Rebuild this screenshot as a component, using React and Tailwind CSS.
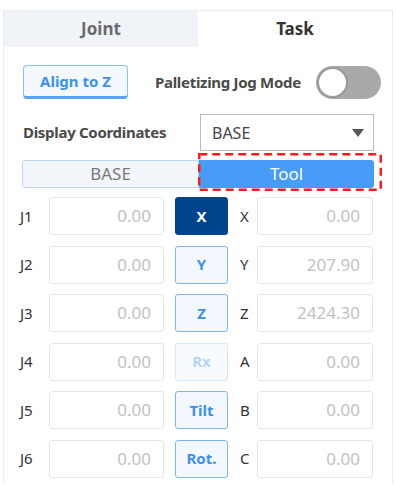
import { useState } from 'react'

const rows = [
  { j: 'J1', btn: 'X', axis: 'X', value: '0.00', state: 'active' },
  { j: 'J2', btn: 'Y', axis: 'Y', value: '207.90', state: 'on' },
  { j: 'J3', btn: 'Z', axis: 'Z', value: '2424.30', state: 'on' },
  { j: 'J4', btn: 'Rx', axis: 'A', value: '0.00', state: 'off' },
  { j: 'J5', btn: 'Tilt', axis: 'B', value: '0.00', state: 'on' },
  { j: 'J6', btn: 'Rot.', axis: 'C', value: '0.00', state: 'on' },
]

function AxisButton({ label, state }) {
  const styles = {
    active: 'bg-[#00448e] border-[#00448e] text-white',
    on: 'bg-[#f3f8ff] border-[#7db6f6] text-[#3d8ff0]',
    off: 'bg-[#f7fbff] border-[#d3e6fb] text-[#b7d5f8]',
  }
  return (
    <button
      className={`w-[53px] h-[38px] shrink-0 rounded-[3px] border text-[15px] font-bold ${styles[state]}`}
    >
      {label}
    </button>
  )
}

function ValueBox({ value, w }) {
  return (
    <div
      className={`${w} h-[38px] shrink-0 rounded-[3px] border border-[#e6e6e6] bg-white flex items-center justify-end pr-[12px] text-[17px] text-[#c2c2c2]`}
    >
      {value}
    </div>
  )
}

export default function App() {
  const [palletizing, setPalletizing] = useState(false)

  return (
    <div className="w-[396px] h-[501px] bg-white pt-[10px] px-[3px] font-['Noto_Sans',sans-serif]">
      <div className="h-[474px] border-t border-x border-[#ececec]">
        <div className="flex h-[36px]">
          <div className="flex-1 bg-[#f0f4f8] flex items-center justify-center text-[17px] font-bold text-[#6b6b6b]">
            Joint
          </div>
          <div className="flex-1 bg-white flex items-center justify-center text-[17px] font-bold text-[#333]">
            Task
          </div>
        </div>

        <div className="pl-[16px] pr-[18px]">
          <div className="flex items-center mt-[18px] h-[34px]">
            <button className="ml-[3px] w-[105px] h-[34px] rounded-[4px] border border-[#8ec0f7] border-b-[3px] border-b-[#5aa2f3] bg-[#f4f9ff] text-[15px] font-bold text-[#3d8ff0]">
              Align to Z
            </button>
            <span className="ml-[27px] text-[15px] font-bold text-[#4a4a4a] tracking-[-0.3px]">
              Palletizing Jog Mode
            </span>
            <button
              onClick={() => setPalletizing(!palletizing)}
              className="ml-auto mr-[-7px] w-[65px] h-[33px] rounded-full bg-[#a9a9a9] p-[1px] flex items-center"
            >
              <span className="w-[31px] h-[31px] rounded-full bg-white border-2 border-[#9a9a9a]" />
            </button>
          </div>

          <div className="flex items-center mt-[15px]">
            <span className="ml-[3px] text-[15px] font-bold text-[#4a4a4a] tracking-[-0.3px]">
              Display Coordinates
            </span>
            <div className="ml-auto w-[174px] h-[37px] border border-[#bdbdbd] bg-white flex items-center pl-[11px] pr-[9px] text-[16px] text-[#444]">
              BASE
              <span className="ml-auto w-0 h-0 border-l-[6px] border-r-[6px] border-t-[8px] border-l-transparent border-r-transparent border-t-[#555]" />
            </div>
          </div>

          <div className="flex mt-[9px] ml-[2px] h-[28px]">
            <div className="flex-1 bg-[#f2f5f9] border border-[#bcd7f4] rounded-l-[3px] flex items-center justify-center text-[17px] text-[#7a7a7a]">
              BASE
            </div>
            <div className="relative flex-1 bg-[#479cf7] rounded-r-[3px] flex items-center justify-center text-[17px] text-white">
              Tool
              <svg className="absolute -top-[7px] -left-[1px] w-[184px] h-[38px] overflow-visible" viewBox="0 0 184 38">
                <rect
                  x="1.25"
                  y="1.25"
                  width="181.5"
                  height="35.5"
                  fill="none"
                  stroke="#ff1a1a"
                  strokeWidth="2.5"
                  strokeDasharray="8 5"
                />
              </svg>
            </div>
          </div>

          <div className="mt-[9px] flex flex-col gap-[10.5px]">
            {rows.map((r) => (
              <div key={r.j} className="flex items-center">
                <span className="w-[29px] shrink-0 text-[15px] text-[#333]">{r.j}</span>
                <ValueBox value="0.00" w="w-[115px]" />
                <div className="ml-[11px]">
                  <AxisButton label={r.btn} state={r.state} />
                </div>
                <span className="ml-[12px] w-[17px] shrink-0 text-[15px] text-[#333]">{r.axis}</span>
                <ValueBox value={r.value} w="w-[116px]" />
              </div>
            ))}
          </div>
        </div>
      </div>
    </div>
  )
}
